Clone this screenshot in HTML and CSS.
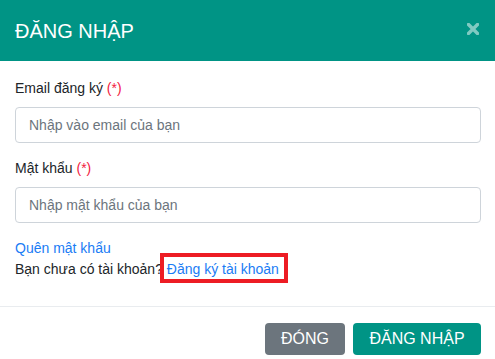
FILE: index.html
```html
<!DOCTYPE html>
<html lang="vi">
<head>
<meta charset="utf-8">
<title>Đăng nhập</title>
<link rel="stylesheet" href="styles.css">
</head>
<body>
<div class="modal">
  <div class="modal-header">
    <h5 class="modal-title">ĐĂNG NHẬP</h5>
    <button class="close" type="button" aria-label="Close">
      <svg width="12" height="12" viewBox="0 0 12 12"><path d="M1.5 1.5 L10.5 10.5 M10.5 1.5 L1.5 10.5" stroke="#80cac2" stroke-width="3.4" stroke-linecap="square"/></svg>
    </button>
  </div>
  <div class="modal-body">
    <div class="form-group">
      <label class="label">Email đăng ký <span class="req">(*)</span></label>
      <input class="form-control" type="text" placeholder="Nhập vào email của bạn">
    </div>
    <div class="form-group">
      <label class="label">Mật khẩu <span class="req">(*)</span></label>
      <input class="form-control" type="password" placeholder="Nhập mật khẩu của bạn">
    </div>
    <div class="links">
      <a class="link" href="#">Quên mật khẩu</a>
      <div class="line">Bạn chưa có tài khoản? <a class="link highlight" href="#">Đăng ký tài khoản</a></div>
    </div>
  </div>
  <div class="modal-footer">
    <button class="btn btn-secondary" type="button">ĐÓNG</button>
    <button class="btn btn-primary" type="button">ĐĂNG NHẬP</button>
  </div>
</div>
</body>
</html>
```
FILE: styles.css
```css
* { box-sizing: border-box; }
html, body { margin: 0; padding: 0; background: #fff; }
body {
  font-family: "Liberation Sans", Arial, sans-serif;
  font-size: 14px;
  line-height: 21px;
  color: #212529;
}
.modal { width: 495px; }
.modal-header {
  background: #009485;
  height: 61px;
  display: flex;
  align-items: center;
  justify-content: space-between;
  padding: 0 16px 0 15px;
}
.modal-title {
  margin: 0;
  font-size: 20px;
  font-weight: 400;
  line-height: 30px;
  color: #fff;
}
.close {
  background: none;
  border: 0;
  padding: 0;
  width: 12px;
  height: 12px;
  display: flex;
  margin-top: -3px;
}
.modal-body { padding: 17px 14px 26px 15px; }
.form-group { margin-bottom: 15px; }
.label { display: block; margin-bottom: 8px; }
.req { color: #f2213f; }
.form-control {
  display: block;
  width: 100%;
  height: 36px;
  border: 1px solid #ced4da;
  border-radius: 4px;
  padding: 0 13px;
  font-family: inherit;
  font-size: 14px;
  color: #495057;
  background: #fff;
}
.form-control::placeholder { color: #6c757d; opacity: 1; }
.links { display: flex; flex-direction: column; }
.link { color: #1a7cf5; text-decoration: none; }
.highlight { position: relative; }
.highlight::after {
  content: "";
  position: absolute;
  top: -8px;
  bottom: -6px;
  left: -7px;
  right: -9px;
  border: 4px solid #ed1c24;
}
.modal-footer {
  border-top: 1px solid #e9ecef;
  display: flex;
  justify-content: flex-end;
  gap: 8px;
  padding: 16px 14px 0 15px;
}
.btn {
  height: 32px;
  padding: 0 16px;
  border: 0;
  border-radius: 4px;
  font-family: inherit;
  font-size: 16px;
  color: #fff;
  line-height: 32px;
}
.btn-secondary { background: #6c757d; width: 80px; }
.btn-primary { background: #009485; width: 128px; }
```
